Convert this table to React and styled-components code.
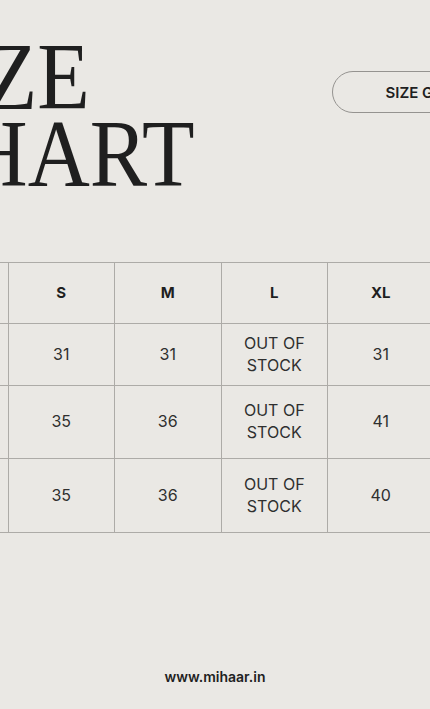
import React from 'react';
import styled, { createGlobalStyle } from 'styled-components';

const GlobalStyle = createGlobalStyle`
  html, body {
    margin: 0;
    padding: 0;
    background: #eae8e4;
  }
  body {
    font-family: Inter, "Liberation Sans", sans-serif;
    color: #2a2a2a;
  }
`;

const Viewport = styled.div`
  width: 100%;
  height: 709px;
  overflow: hidden;
  display: flex;
  flex-direction: column;
`;

const Canvas = styled.div`
  width: 640px;
  flex-shrink: 0;
  margin-left: -99px;
  display: flex;
  flex-direction: column;
`;

const Header = styled.div`
  display: flex;
  justify-content: space-between;
  align-items: flex-start;
  padding-top: 39px;
`;

const Title = styled.h1`
  margin: 0;
  padding-left: 8px;
  font-family: "Liberation Serif", "Times New Roman", serif;
  font-weight: 400;
  font-size: 95px;
  line-height: 77px;
  color: #1f1f1f;
  transform: scaleX(0.905);
  transform-origin: left center;
`;

const GuideButton = styled.button`
  margin-top: 32px;
  margin-right: 19px;
  width: 190px;
  height: 42px;
  border: 1.5px solid #959390;
  border-radius: 21px;
  background: transparent;
  font-family: Inter, "Liberation Sans", sans-serif;
  font-size: 15px;
  font-weight: 600;
  color: #1f1f1f;
`;

const Table = styled.table`
  margin-top: 69px;
  width: 640px;
  table-layout: fixed;
  border-collapse: collapse;
`;

const Row = styled.tr`
  height: ${p => p.$h}px;
`;

const HeadCell = styled.th`
  border: 1px solid #adaba7;
  font-size: 15px;
  font-weight: 700;
  color: #1f1f1f;
  text-align: center;
  padding: 0 0 2px;
`;

const Cell = styled.td`
  border: 1px solid #adaba7;
  font-size: 16px;
  font-weight: 400;
  line-height: 22px;
  color: #2f2f2f;
  text-align: center;
  padding: 0 6px 2px;
`;

const Footer = styled.div`
  margin-top: 134px;
  width: 100%;
  text-align: center;
  font-size: 14px;
  font-weight: 600;
  line-height: 20px;
  color: #1f1f1f;
`;

const sizes = ['S', 'M', 'L', 'XL', 'XXL'];

const rows = [
  { label: 'Bust', h: 62, values: ['31', '31', 'OUT OF STOCK', '31', '31'] },
  { label: 'Waist', h: 73, values: ['35', '36', 'OUT OF STOCK', '41', '43'] },
  { label: 'Hip', h: 74, values: ['35', '36', 'OUT OF STOCK', '40', '42'] },
];

const App = () => {
  return (
    <Viewport>
      <GlobalStyle />
      <Canvas>
        <Header>
          <Title>
            SIZE
            <br />
            CHART
          </Title>
          <GuideButton>SIZE GUIDE</GuideButton>
        </Header>
        <Table>
          <thead>
            <Row $h={61}>
              <HeadCell>SIZE</HeadCell>
              {sizes.map(s => (
                <HeadCell key={s}>{s}</HeadCell>
              ))}
            </Row>
          </thead>
          <tbody>
            {rows.map(r => (
              <Row key={r.label} $h={r.h}>
                <Cell>{r.label}</Cell>
                {r.values.map((v, i) => (
                  <Cell key={i}>{v === 'OUT OF STOCK' ? <>OUT OF<br />STOCK</> : v}</Cell>
                ))}
              </Row>
            ))}
          </tbody>
        </Table>
      </Canvas>
      <Footer>www.mihaar.in</Footer>
    </Viewport>
  );
};

export default App;
